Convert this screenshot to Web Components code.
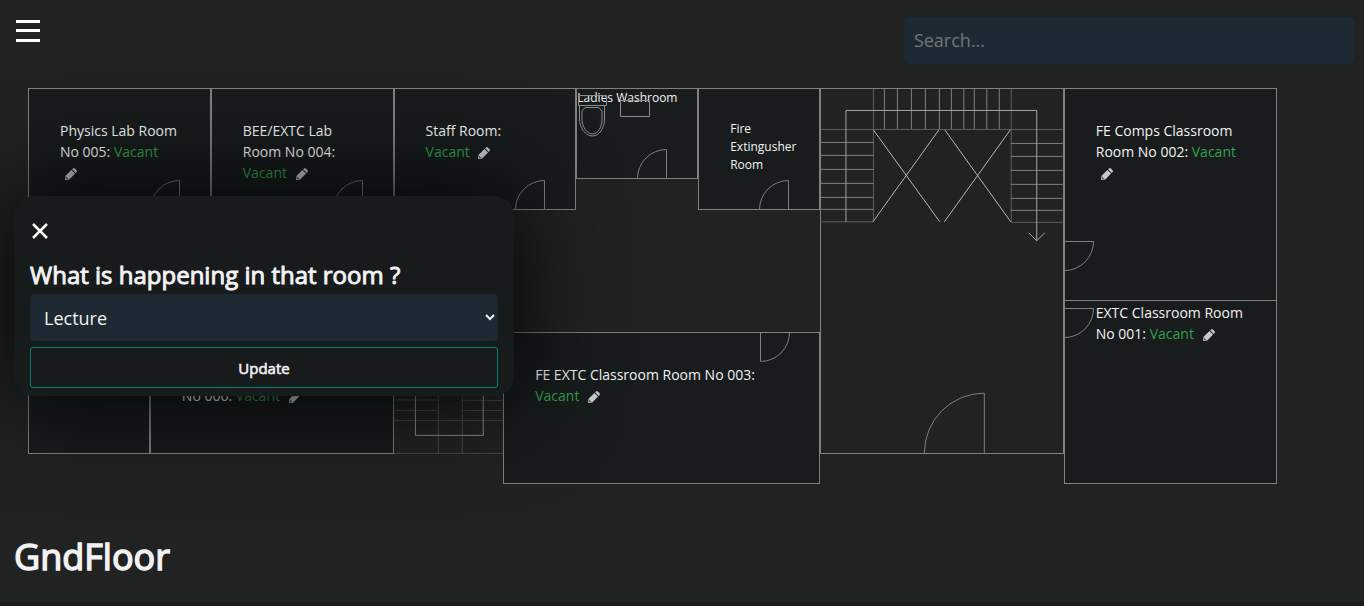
<!DOCTYPE html>
<html lang="en">
<head>
<meta charset="utf-8">
<meta name="viewport" content="width=device-width, initial-scale=1">
<title>GndFloor</title>
<style>
  html { background: #1e1b1f; }
  body { margin: 0; background: #212322; color: #f2f2f2; font-family: "Open Sans", "Noto Sans", sans-serif; }
</style>
</head>
<body>
<floor-page></floor-page>

<template id="t-page">
  <style>
    :host { display: block; position: relative; padding-bottom: 20px; }
    floor-plan { margin: 24px 87px 0 28px; }
    h1 { margin: 48px 14px 0; font-size: 36px; line-height: 50px; font-weight: 400; -webkit-text-stroke: .04em currentColor; }
    room-dialog { position: absolute; left: 14px; top: 196px; z-index: 5; }
  </style>
  <top-bar></top-bar>
  <floor-plan></floor-plan>
  <h1>GndFloor</h1>
  <room-dialog></room-dialog>
</template>

<template id="t-bar">
  <style>
    :host { display: flex; justify-content: space-between; align-items: flex-start; padding: 17px 10px 0 16px; }
    button { all: unset; cursor: pointer; margin-top: 2px; }
    svg { display: block; }
    input { box-sizing: border-box; width: 33vw; height: 47px; border: 0; border-radius: 5px; padding: 0 10px 2px; background: #1d2a33; color: #f2f2f2; font: inherit; font-size: 18px; }
    input::placeholder { color: #757575; }
  </style>
  <button aria-label="Open menu"><svg width="24" height="24" viewBox="0 0 24 24" fill="#fff"><path d="M0 1h24v3H0zM0 10h24v3H0zM0 20h24v3H0z"/></svg></button>
  <input type="search" aria-label="Search" placeholder="Search...">
</template>

<template id="t-plan">
  <style>
    :host { display: grid; aspect-ratio: 41 / 13;
      grid-template-columns: minmax(0,4fr) minmax(0,2fr) minmax(0,6fr) minmax(0,3.6fr) minmax(0,2.4fr) minmax(0,4fr) minmax(0,4fr) minmax(0,8fr) minmax(0,7fr);
      grid-template-rows: minmax(0,3fr) minmax(0,1fr) minmax(0,3fr) minmax(0,1fr) minmax(0,4fr) minmax(0,1fr); }
    div svg { display: block; width: 100%; height: 100%; overflow: visible; fill: none; stroke: #808080; }
    .hall { border: 1px solid #808080; grid-area: 1 / 8 / 6 / 9; }
    .stairs { grid-area: 5 / 4 / 6 / 5; }
  </style>
  <floor-room style="grid-area: 1 / 1 / 3 / 3" door="bottom" status="Vacant">Physics Lab Room No 005:</floor-room>
  <floor-room style="grid-area: 1 / 3 / 3 / 4" door="bottom" status="Vacant">BEE/EXTC Lab Room No 004:</floor-room>
  <floor-room style="grid-area: 1 / 4 / 3 / 6" door="bottom" status="Vacant">Staff Room:</floor-room>
  <floor-room style="grid-area: 1 / 6 / 2 / 7" door="bottom" small flush>Ladies Washroom
    <svg slot="fixtures" width="76" height="50" viewBox="0 0 76 50" aria-hidden="true">
      <path d="M1.500 6.500h28v10h-28zM2.500 17v13c0 9 6 17 13 17s12-8 12-17V17M5 30c0 8 5 15 10.500 15S25 38 25 30v-8l-3-3.500H8L5 22z"/>
      <path d="M43.500 11.500h29v16h-29z"/>
    </svg>
  </floor-room>
  <floor-room style="grid-area: 1 / 7 / 3 / 8" door="bottom" small>Fire Extingusher Room</floor-room>
  <div class="hall">
    <svg viewBox="821 89 242 364" preserveAspectRatio="none" aria-hidden="true">
      <path stroke="#5c5d5d" d="M873.500 89v133M1011.500 89v133M821 129.500h242M821 222h52M1011 222.500h52"/>
      <path d="M884.500 89v40M897.500 89v40M911.500 89v40M925.500 89v40M939.500 89v40M951.500 89v40M964 89v40M974.500 89v40M987 89v40M999.500 89v40"/>
      <path d="M821 142.500h53M821 155.500h53M821 169.500h53M821 183.500h53M821 197.500h53M821 209.500h53M1011 143.500h52M1011 156.500h52M1011 170.500h52M1011 184.500h52M1011 198.500h52M1011 210.500h52"/>
      <path stroke="#b8b8b8" d="M873.500 130l66.500 92M939 130l-66 92M945 130l66 92M1010.500 130l-66 92"/>
      <path stroke="#a6a6a6" d="M846 222V110.500h191V241M1029 233l8 8 8-8"/>
      <path d="M984.500 453.500v-60a60 60 0 0 0-60 60"/>
    </svg>
  </div>
  <floor-room style="grid-area: 1 / 9 / 4 / 10" door="left-low" status="Vacant">FE Comps Classroom Room No 002:</floor-room>
  <floor-room style="grid-area: 4 / 9 / 7 / 10" door="left-high" status="Vacant" flush-top>EXTC Classroom Room No 001:</floor-room>
  <floor-room style="grid-area: 5 / 1 / 6 / 2"></floor-room>
  <floor-room style="grid-area: 5 / 2 / 6 / 4" status="Vacant">Chemistry Lab Room<br>No 006:</floor-room>
  <div class="stairs">
    <svg viewBox="394 332 110 122" preserveAspectRatio="none" aria-hidden="true">
      <path stroke="#484a49" d="M394 400h44M462 400.500h42M394 410.500h44M462 410.500h42M394 420.500h110M438.500 332v121M462.500 332v121M394 453.500h110"/>
      <path stroke="#909090" d="M415.500 332v103.500h68V332"/>
    </svg>
  </div>
  <floor-room style="grid-area: 5 / 5 / 7 / 8" door="top" status="Vacant">FE EXTC Classroom Room No 003:</floor-room>
</template>

<template id="t-room">
  <style>
    :host { display: block; box-sizing: border-box; position: relative; border: 1px solid #808080; background: #181c1d; padding: 31px; font-size: 14px; line-height: 21px; }
    :host([small]) { font-size: 12px; line-height: 18px; }
    :host([flush]) { padding: 0; }
    :host([flush-top]) { padding-top: 1px; border-top: 0; }
    .status { color: #2fa14c; }
    button { all: unset; cursor: pointer; margin: 0 5px; width: 12px; height: 12px; vertical-align: -2px; }
    button svg { display: block; }
    .door { position: absolute; width: 30px; height: 30px; fill: none; stroke: #808080; }
    .bottom { right: 30px; bottom: -1px; }
    .top { right: 29px; top: -1px; }
    .left-low { left: 0; bottom: 29px; }
    .left-high { left: 0; top: 7px; }
    ::slotted(svg) { position: absolute; left: 0; top: 0; fill: none; stroke: #8c8c8c; }
  </style>
  <slot></slot>
  <slot name="fixtures"></slot>
</template>

<template id="t-dialog">
  <style>
    :host { display: block; box-sizing: border-box; width: min(500px, calc(100% - 28px)); padding: 24px 16px 8px; border-radius: 20px; background: #181b1c; box-shadow: 0 0 100px #000; }
    .close { all: unset; cursor: pointer; display: block; padding: 3px 2px; }
    svg { display: block; }
    label { display: block; margin: 16px 0 2px; font-size: 24px; line-height: 34px; -webkit-text-stroke: .04em currentColor; }
    select { display: block; box-sizing: border-box; width: 100%; height: 47px; border: 0; border-radius: 5px; padding: 0 10px; background: #1d2a33; color: #f2f2f2; font: inherit; font-size: 18px; }
    .update { display: block; box-sizing: border-box; width: 100%; height: 41px; margin-top: 6px; border: 1px solid #008073; border-radius: 3px; background: none; color: #f2f2f2; font: inherit; font-size: 15px; -webkit-text-stroke: .04em currentColor; cursor: pointer; }
  </style>
  <button class="close" aria-label="Close"><svg width="16" height="16" viewBox="0 0 16 16" stroke="#fff" stroke-width="2.500"><path d="M1 1l14 14M15 1L1 15"/></svg></button>
  <label for="activity">What is happening in that room ?</label>
  <select id="activity"><option>Lecture</option></select>
  <button class="update">Update</button>
</template>

<script>
  class TemplateElement extends HTMLElement {
    constructor() {
      super();
      const t = document.getElementById(this.constructor.template);
      this.attachShadow({ mode: 'open' }).append(t.content.cloneNode(true));
    }
  }
  const doors = {
    bottom: 'M29.5 29.500V.5a29 29 0 0 0-29 29',
    top: 'M.5 0v29.500a29 29 0 0 0 29-29.500',
    'left-low': 'M0 .5h28.500a29 29 0 0 1-28.500 29',
    'left-high': 'M0 .5h28.500a29 29 0 0 1-28.500 29'
  };
  class FloorRoom extends TemplateElement {
    static template = 't-room';
    connectedCallback() {
      const status = this.getAttribute('status'), door = this.getAttribute('door');
      const slot = this.shadowRoot.querySelector('slot');
      if (status) slot.insertAdjacentHTML('afterend', ` <span class="status">${status}</span> <button aria-label="Edit room"><svg width="12" height="12" viewBox="0 0 12 12" fill="#c8c8c8"><path d="M0 12l.6-4.300L6.400 1.900l3.700 3.700L4.300 11.400zM7.100 1.200L8 .4q.9-.8 1.800 0l1.800 1.800q.8.9 0 1.800l-.8.900z"/><path fill="#181c1d" d="M1.300 9l1.700 1.700-1.100.3-.9-.9z"/></svg></button>`);
      if (door) this.shadowRoot.lastElementChild.insertAdjacentHTML('afterend', `<svg class="door ${door}" viewBox="0 0 30 30" aria-hidden="true"><path d="${doors[door]}"/></svg>`);
    }
  }
  customElements.define('floor-room', FloorRoom);
  customElements.define('top-bar', class extends TemplateElement { static template = 't-bar'; });
  customElements.define('floor-plan', class extends TemplateElement { static template = 't-plan'; });
  customElements.define('room-dialog', class extends TemplateElement { static template = 't-dialog'; });
  customElements.define('floor-page', class extends TemplateElement { static template = 't-page'; });
</script>
</body>
</html>
